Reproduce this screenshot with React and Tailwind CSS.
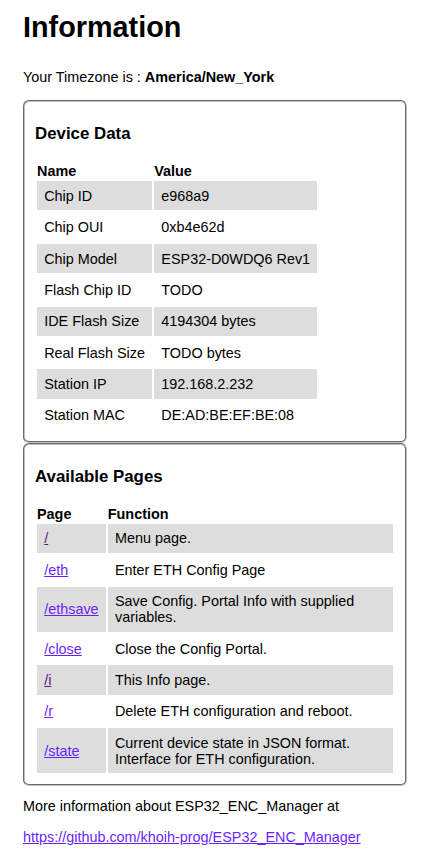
import React from "react";

const device = [
  ["Chip ID", "e968a9"],
  ["Chip OUI", "0xb4e62d"],
  ["Chip Model", "ESP32-D0WDQ6 Rev1"],
  ["Flash Chip ID", "TODO"],
  ["IDE Flash Size", "4194304 bytes"],
  ["Real Flash Size", "TODO bytes"],
  ["Station IP", "192.168.2.232"],
  ["Station MAC", "DE:AD:BE:EF:BE:08"],
];

const pages = [
  ["/", ["Menu page."], true],
  ["/eth", ["Enter ETH Config Page"], false],
  ["/ethsave", ["Save Config. Portal Info with supplied variables."], false],
  ["/close", ["Close the Config Portal."], false],
  ["/i", ["This Info page."], true],
  ["/r", ["Delete ETH configuration and reboot."], false],
  ["/state", ["Current device state in JSON format.", "Interface for ETH configuration."], false],
];

function Fieldset({ children }) {
  return (
    <fieldset className="w-[384px] border-2 [border-style:groove] border-[#c0c0c0] rounded-[6px] pt-[5px] pb-[9px] px-[10px]">
      {children}
    </fieldset>
  );
}

export default function App() {
  return (
    <div className="pl-[23px] pb-[10px] text-[14.4px] leading-[normal] text-black bg-white font-['Liberation_Sans',Arial,sans-serif]">
      <h1 className="pt-[11.4px] text-[28.8px] font-bold leading-[normal]">Information</h1>
      <div className="mt-[25px]">
        Your Timezone is : <b className="font-bold">America/New_York</b>
      </div>
      <div className="mt-[15px]">
        <Fieldset>
          <h3 className="my-[16.85px] text-[16.85px] font-bold">Device Data</h3>
          <table className="border-separate border-spacing-[2px]">
            <thead>
              <tr>
                <th className="p-0 text-left font-bold">Name</th>
                <th className="p-0 text-left font-bold">Value</th>
              </tr>
            </thead>
            <tbody>
              {device.map(([k, v], i) => (
                <tr key={k}>
                  <td className={"px-[7.2px] py-[6.7px] " + (i % 2 === 0 ? "bg-[#dddddd]" : "")}>{k}</td>
                  <td className={"px-[7.2px] py-[6.7px] " + (i % 2 === 0 ? "bg-[#dddddd]" : "")}>{v}</td>
                </tr>
              ))}
            </tbody>
          </table>
        </Fieldset>
        <Fieldset>
          <h3 className="my-[16.85px] text-[16.85px] font-bold">Available Pages</h3>
          <table className="w-full border-separate border-spacing-[2px]">
            <thead>
              <tr>
                <th className="p-0 text-left font-bold">Page</th>
                <th className="p-0 text-left font-bold">Function</th>
              </tr>
            </thead>
            <tbody>
              {pages.map(([p, f, visited], i) => (
                <tr key={p}>
                  <td className={"px-[7.2px] py-[6.7px] align-middle whitespace-nowrap " + (i % 2 === 0 ? "bg-[#dddddd]" : "")}>
                    <a href="#" className={"underline " + (visited ? "text-[#551a8b]" : "text-[#6a1fff]")}>{p}</a>
                  </td>
                  <td className={"px-[7.2px] py-[6.7px] align-middle " + (i % 2 === 0 ? "bg-[#dddddd]" : "")}>
                    {f.map((line, j) => (
                      <React.Fragment key={j}>
                        {j > 0 && <br />}
                        {line}
                      </React.Fragment>
                    ))}
                  </td>
                </tr>
              ))}
            </tbody>
          </table>
        </Fieldset>
      </div>
      <div className="mt-[12px]">More information about ESP32_ENC_Manager at</div>
      <div className="mt-[15px]">
        <a href="#" className="underline text-[#6a1fff]">https://github.com/khoih-prog/ESP32_ENC_Manager</a>
      </div>
    </div>
  );
}
